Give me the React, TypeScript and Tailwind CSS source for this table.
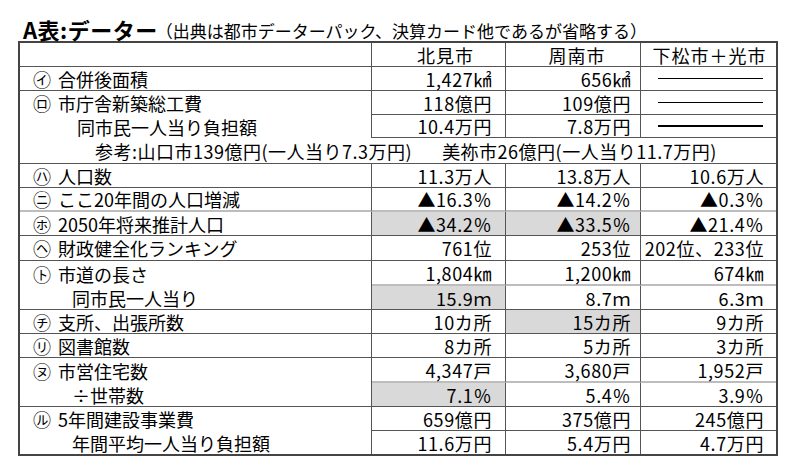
import React from "react";

type Row = {
  h: number;
  label: string;
  circle?: string;
  pl: number;
  vals?: string[];
  hl?: boolean[];
  labelB: "n" | "g" | "none";
  valB: "n" | "g" | "none";
  header?: boolean;
  span?: boolean;
};

const DASH = "__DASH__";

const rows: Row[] = [
  { h: 24, label: "", pl: 13, vals: ["北見市", "周南市", "下松市＋光市"], labelB: "n", valB: "n", header: true },
  { h: 24, circle: "㋑", label: "合併後面積", pl: 13, vals: ["1,427㎢", "656㎢", DASH], labelB: "n", valB: "n" },
  { h: 24, circle: "㋺", label: "市庁舎新築総工費", pl: 13, vals: ["118億円", "109億円", DASH], labelB: "none", valB: "n" },
  { h: 23, label: "同市民一人当り負担額", pl: 57, vals: ["10.4万円", "7.8万円", DASH], labelB: "none", valB: "n" },
  { h: 26, label: "", pl: 75, labelB: "n", valB: "n", span: true },
  { h: 24, circle: "㋩", label: "人口数", pl: 13, vals: ["11.3万人", "13.8万人", "10.6万人"], labelB: "n", valB: "n" },
  { h: 24, circle: "㋥", label: "ここ20年間の人口増減", pl: 13, vals: ["▲16.3％", "▲14.2％", "▲0.3％"], labelB: "g", valB: "g" },
  { h: 24, circle: "㋭", label: "2050年将来推計人口", pl: 13, vals: ["▲34.2％", "▲33.5％", "▲21.4％"], hl: [true, true, false], labelB: "n", valB: "n" },
  { h: 25, circle: "㋬", label: "財政健全化ランキング", pl: 13, vals: ["761位", "253位", "202位、233位"], labelB: "n", valB: "n" },
  { h: 25, circle: "㋣", label: "市道の長さ", pl: 13, vals: ["1,804㎞", "1,200㎞", "674㎞"], labelB: "none", valB: "g" },
  { h: 24, label: "同市民一人当り", pl: 52, vals: ["15.9ｍ", "8.7ｍ", "6.3ｍ"], hl: [true, false, false], labelB: "n", valB: "n" },
  { h: 24, circle: "㋠", label: "支所、出張所数", pl: 13, vals: ["10カ所", "15カ所", "9カ所"], hl: [false, true, false], labelB: "n", valB: "n" },
  { h: 24, circle: "㋷", label: "図書館数", pl: 13, vals: ["8カ所", "5カ所", "3カ所"], labelB: "n", valB: "n" },
  { h: 25, circle: "㋦", label: "市営住宅数", pl: 13, vals: ["4,347戸", "3,680戸", "1,952戸"], labelB: "none", valB: "g" },
  { h: 24, label: "÷世帯数", pl: 52, vals: ["7.1％", "5.4％", "3.9％"], hl: [true, false, false], labelB: "n", valB: "n" },
  { h: 24, circle: "㋸", label: "5年間建設事業費", pl: 13, vals: ["659億円", "375億円", "245億円"], labelB: "none", valB: "n" },
  { h: 23, label: "年間平均一人当り負担額", pl: 52, vals: ["11.6万円", "5.4万円", "4.7万円"], labelB: "none", valB: "none" },
];

const borderCls = (b: "n" | "g" | "none") =>
  b === "n" ? "border-b border-b-[#555]" : b === "g" ? "border-b-2 border-b-[#bdbdbd]" : "";

const padR = ["pr-[13px]", "pr-[9px]", "pr-[12px]"];
const headPad = ["pl-[14px]", "pl-[8px]", "pl-[2px]"];

export default function App() {
  return (
    <div className="w-[800px] h-[471px] bg-white text-black font-['Noto_Sans_CJK_JP',sans-serif] overflow-hidden">
      <div className="h-[41px] flex items-end pl-[23px] pb-[1px]">
        <span className="text-[22px] font-bold leading-none tracking-[0.5px]">A表:データー</span>
        <span className="text-[17px] leading-none pb-[1px] ml-[-2px]">（出典は都市データーパック、決算カード他であるが省略する）</span>
      </div>
      <div className="ml-[18px] w-[760px] border-2 border-[#444]">
        <div className="grid grid-cols-[352px_134px_135px_135px]">
          {rows.map((r, i) => {
            if (r.span) {
              return (
                <div
                  key={i}
                  className={`col-span-4 flex items-center text-[18px] leading-none whitespace-nowrap tracking-[0.5px] ${borderCls(r.labelB)}`}
                  style={{ height: r.h, paddingLeft: r.pl }}
                >
                  <span>参考:山口市139億円(一人当り7.3万円)</span>
                  <span className="ml-[30px]">美祢市26億円(一人当り11.7万円)</span>
                </div>
              );
            }
            return (
              <React.Fragment key={i}>
                <div
                  className={`flex items-center text-[18px] leading-none whitespace-nowrap border-r border-r-[#555] ${borderCls(r.labelB)}`}
                  style={{ height: r.h, paddingLeft: r.pl }}
                >
                  {r.circle && <span className="text-[18px] leading-none mr-[7px]">{r.circle}</span>}
                  <span>{r.label}</span>
                </div>
                {r.vals!.map((v, j) => (
                  <div
                    key={j}
                    className={`flex items-center text-[18px] leading-none whitespace-nowrap tracking-[0.6px] ${j < 2 ? "border-r border-r-[#555]" : ""} ${borderCls(r.valB)} ${
                      r.hl && r.hl[j] ? "bg-[#d9d9d9]" : ""
                    } ${r.header ? "justify-center tracking-[1px] " + headPad[j] : v === DASH ? "justify-center pl-[4px]" : "justify-end " + padR[j]}`}
                    style={{ height: r.h }}
                  >
                    {v === DASH ? <div className="w-[105px] h-[1.5px] bg-black" /> : v}
                  </div>
                ))}
              </React.Fragment>
            );
          })}
        </div>
      </div>
    </div>
  );
}
